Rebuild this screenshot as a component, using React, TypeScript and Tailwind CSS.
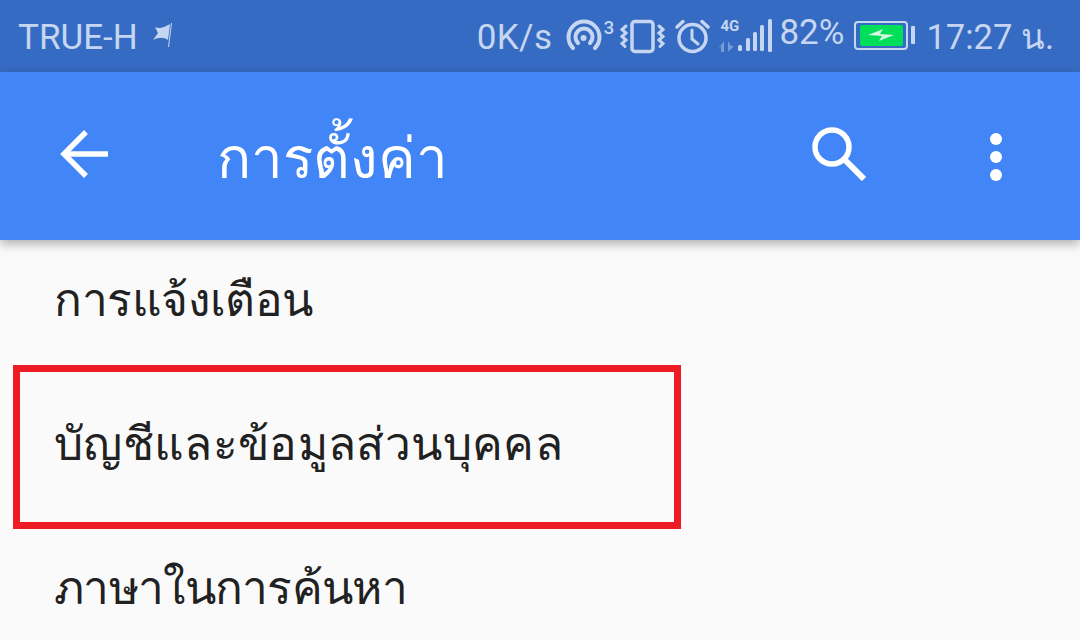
const rows = [
  { label: 'การแจ้งเตือน', cls: 'tracking-[-0.4px]' },
  { label: 'บัญชีและข้อมูลส่วนบุคคล', cls: 'tracking-[0.35px]' },
  { label: 'ภาษาในการค้นหา', cls: 'tracking-[-0.7px]' },
]

// hotspot, vibrate, alarm and signal glyphs, drawn on one strip of the status bar
function StatusIcons() {
  return (
    <svg width="206" height="72" viewBox="0 0 206 72" fill="none" stroke="#c6d6f0" strokeLinecap="round" className="block">
      <g strokeWidth="4">
        <path d="M7 48 A15.5 15.5 0 1 1 29 48" />
        <path d="M12 43 A8.5 8.5 0 1 1 24 43" />
      </g>
      <circle cx="17.5" cy="38" r="3" fill="#c6d6f0" stroke="none" />
      <rect x="66" y="21.5" width="21" height="30" rx="3" strokeWidth="3.5" />
      <g strokeWidth="3">
        <path d="M60 26 l-4 3.5 4 3.5 -4 3.5 4 3.5 -4 3.5 3 3" />
        <path d="M93 26 l4 3.5 -4 3.5 4 3.5 -4 3.5 4 3.5 -3 3" />
      </g>
      <g strokeWidth="3.5">
        <circle cx="126.5" cy="38" r="13.5" />
        <path d="M111 27 l6 -5.5" />
        <path d="M142 27 l-6 -5.5" />
      </g>
      <path d="M126 30 v9 l6 5" strokeWidth="3" />
      <g stroke="none" fill="#c6d6f0">
        <rect x="172" y="45" width="4" height="6" rx="1.5" />
        <rect x="180" y="38" width="4" height="13" rx="1.5" />
        <rect x="187" y="32" width="4" height="19" rx="1.5" />
        <rect x="194" y="25" width="4" height="26" rx="1.5" />
        <rect x="202" y="19" width="4" height="33" rx="1.5" />
      </g>
      <g stroke="none" fill="#c6d6f0" opacity="0.45">
        <path d="M158 41 v11 h-3 v-6 l-3 3 z" />
        <path d="M162 41 v11 l6 -6 h-3 z" />
      </g>
    </svg>
  )
}

export default function App() {
  return (
    <div className="w-[1080px] h-[640px] overflow-hidden bg-[#fafafa] flex flex-col font-['Roboto','Noto_Sans',sans-serif]">
      {/* status bar */}
      <div className="h-[72px] bg-[#356bc2] flex items-center text-[#c6d6f0] pl-[18px] shrink-0">
        <span className="text-[35px] leading-none mt-[2px]">TRUE-H</span>
        <svg width="20" height="26" viewBox="0 0 20 26" className="ml-[15px]">
          <path d="M2 4 C6 6 10 5 17 1 L15 17 C11 14 6 14 0 17 L5 10 Z" fill="#c6d6f0" />
          <path d="M18.5 0 L15.5 24" stroke="#c6d6f0" strokeWidth="1" />
        </svg>
        <div className="ml-auto flex items-center">
          <span className="text-[35px] leading-none tracking-[0.4px] mt-[2px]">0K/s</span>
          <div className="relative ml-[14px] w-[206px] h-[72px]">
            <StatusIcons />
            <span className="absolute left-[37px] top-[18px] text-[19px] font-medium leading-none">3</span>
            <span className="absolute left-[154px] top-[19px] text-[15px] font-bold leading-none">4G</span>
          </div>
          <span className="text-[35px] leading-none ml-[7px] -mt-[8px]">82%</span>
          <div className="ml-[10px] flex items-center -mt-[2px]">
            <div className="w-[54px] h-[29px] border-2 border-[#c6d6f0] rounded-[4px] flex items-center justify-center">
              <div className="w-[43px] h-[21px] bg-[#00de5a] rounded-[2px] flex items-center justify-center">
                <svg width="26" height="12" viewBox="0 0 26 12">
                  <path d="M0 6 L15 0 L12 5 L26 6 L11 12 L14 7 Z" fill="#d4f7e0" />
                </svg>
              </div>
            </div>
            <div className="w-[4px] h-[18px] bg-[#c6d6f0] ml-[3px] rounded-[1px]" />
          </div>
          <span className="text-[34.5px] leading-none ml-[11px] mr-[26px] mt-[2px]">17:27 น.</span>
        </div>
      </div>

      {/* app bar */}
      <div className="h-[168px] bg-[#4285f6] flex items-center text-white shrink-0 relative z-10 shadow-[0_4px_10px_rgba(0,0,0,0.3)] pb-[2px]">
        <svg width="50" height="50" viewBox="0 0 50 50" fill="none" stroke="white" strokeWidth="5.5" className="ml-[59px] -mt-[2px]">
          <path d="M49 25 H5" />
          <path d="M27 3 L5 25 L27 47" />
        </svg>
        <h1 className="ml-[108px] text-[56.5px] leading-none font-normal mt-[8px]">การตั้งค่า</h1>
        <svg width="54" height="54" viewBox="0 0 54 54" fill="none" stroke="white" className="ml-auto -mt-[2px]">
          <circle cx="20" cy="20" r="17" strokeWidth="5.5" />
          <path d="M33 33 L52 52" strokeWidth="6" />
        </svg>
        <div className="ml-[124px] mr-[78px] flex flex-col gap-[6px] mt-[3px]">
          <div className="w-3 h-3 rounded-full bg-white" />
          <div className="w-3 h-3 rounded-full bg-white" />
          <div className="w-3 h-3 rounded-full bg-white" />
        </div>
      </div>

      {/* list */}
      <div className="-mt-[12px]">
        {rows.map((r, i) => (
          <div key={r.label} className={`relative h-[144px] flex items-center pl-[54px] text-[46px] leading-none text-[#212121] ${r.cls}`}>
            {r.label}
            {i === 1 && (
              <div className="absolute left-[13px] top-[-7px] w-[668px] h-[164px] border-[7px] border-[#ed1c24]" />
            )}
          </div>
        ))}
      </div>
    </div>
  )
}
